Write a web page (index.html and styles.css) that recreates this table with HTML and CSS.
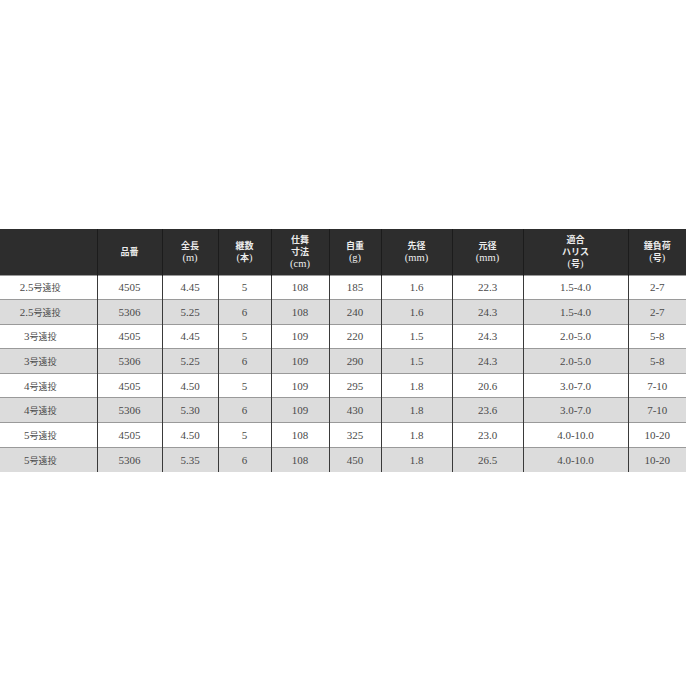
FILE: index.html
```html
<!DOCTYPE html>
<html lang="ja">
<head>
<meta charset="utf-8">
<link rel="stylesheet" href="styles.css">
</head>
<body>
<table class="spec">
  <colgroup>
    <col class="c1"><col class="c2"><col class="c3"><col class="c4"><col class="c5"><col class="c6"><col class="c7"><col class="c8"><col class="c9"><col class="c10">
  </colgroup>
  <thead>
    <tr>
      <th></th>
      <th><span class="jp">品番</span></th>
      <th><span class="jp">全長</span><br>(m)</th>
      <th><span class="jp">継数</span><br>(<span class="jp">本</span>)</th>
      <th><span class="jp">仕舞</span><br><span class="jp">寸法</span><br>(cm)</th>
      <th><span class="jp">自重</span><br>(g)</th>
      <th><span class="jp">先径</span><br>(mm)</th>
      <th><span class="jp">元径</span><br>(mm)</th>
      <th><span class="jp">適合</span><br><span class="jp">ハリス</span><br>(<span class="jp">号</span>)</th>
      <th><span class="jp">錘負荷</span><br>(<span class="jp">号</span>)</th>
    </tr>
  </thead>
  <tbody>
    <tr><td>2.5<span class="jp">号遠投</span></td><td>4505</td><td>4.45</td><td>5</td><td>108</td><td>185</td><td>1.6</td><td>22.3</td><td>1.5-4.0</td><td>2-7</td></tr>
    <tr class="alt"><td>2.5<span class="jp">号遠投</span></td><td>5306</td><td>5.25</td><td>6</td><td>108</td><td>240</td><td>1.6</td><td>24.3</td><td>1.5-4.0</td><td>2-7</td></tr>
    <tr><td>3<span class="jp">号遠投</span></td><td>4505</td><td>4.45</td><td>5</td><td>109</td><td>220</td><td>1.5</td><td>24.3</td><td>2.0-5.0</td><td>5-8</td></tr>
    <tr class="alt"><td>3<span class="jp">号遠投</span></td><td>5306</td><td>5.25</td><td>6</td><td>109</td><td>290</td><td>1.5</td><td>24.3</td><td>2.0-5.0</td><td>5-8</td></tr>
    <tr><td>4<span class="jp">号遠投</span></td><td>4505</td><td>4.50</td><td>5</td><td>109</td><td>295</td><td>1.8</td><td>20.6</td><td>3.0-7.0</td><td>7-10</td></tr>
    <tr class="alt"><td>4<span class="jp">号遠投</span></td><td>5306</td><td>5.30</td><td>6</td><td>109</td><td>430</td><td>1.8</td><td>23.6</td><td>3.0-7.0</td><td>7-10</td></tr>
    <tr><td>5<span class="jp">号遠投</span></td><td>4505</td><td>4.50</td><td>5</td><td>108</td><td>325</td><td>1.8</td><td>23.0</td><td>4.0-10.0</td><td>10-20</td></tr>
    <tr class="alt"><td>5<span class="jp">号遠投</span></td><td>5306</td><td>5.35</td><td>6</td><td>108</td><td>450</td><td>1.8</td><td>26.5</td><td>4.0-10.0</td><td>10-20</td></tr>
  </tbody>
</table>
</body>
</html>
```
FILE: styles.css
```css
html, body {
  margin: 0;
  padding: 0;
  background: #ffffff;
}
body {
  padding-top: 229px;
}
.spec {
  width: 686px;
  table-layout: fixed;
  border-collapse: collapse;
  font-family: "Liberation Serif", "Noto Sans CJK JP", serif;
}
.c1 { width: 97px; }
.c2 { width: 65px; }
.c3 { width: 56px; }
.c4 { width: 53px; }
.c5 { width: 58px; }
.c6 { width: 52px; }
.c7 { width: 71px; }
.c8 { width: 71px; }
.c9 { width: 105px; }
.c10 { width: 58px; }
.jp {
  font-family: "Noto Sans CJK JP", sans-serif;
  font-size: 9px;
  line-height: 12px;
}
.spec th {
  background: #2d2d2d;
  color: #ececec;
  font-weight: normal;
  font-size: 10.5px;
  line-height: 12px;
  height: 46px;
  padding: 0;
  text-align: center;
  vertical-align: middle;
  border-left: 1px solid #1c1c1c;
  box-sizing: border-box;
}
.spec th .jp {
  font-weight: bold;
}
.spec td {
  height: 24.6px;
  padding: 0;
  font-size: 11px;
  line-height: 14px;
  color: #4a4a4a;
  text-align: center;
  vertical-align: middle;
  border-left: 1px solid #3a3a3a;
  border-top: 1px solid #9a9a9a;
  box-sizing: border-box;
}
.spec th:first-child,
.spec td:first-child {
  border-left: none;
}
.spec td:first-child {
  padding-right: 16px;
}
.spec tr.alt td {
  background: #dcdcdc;
}
```
